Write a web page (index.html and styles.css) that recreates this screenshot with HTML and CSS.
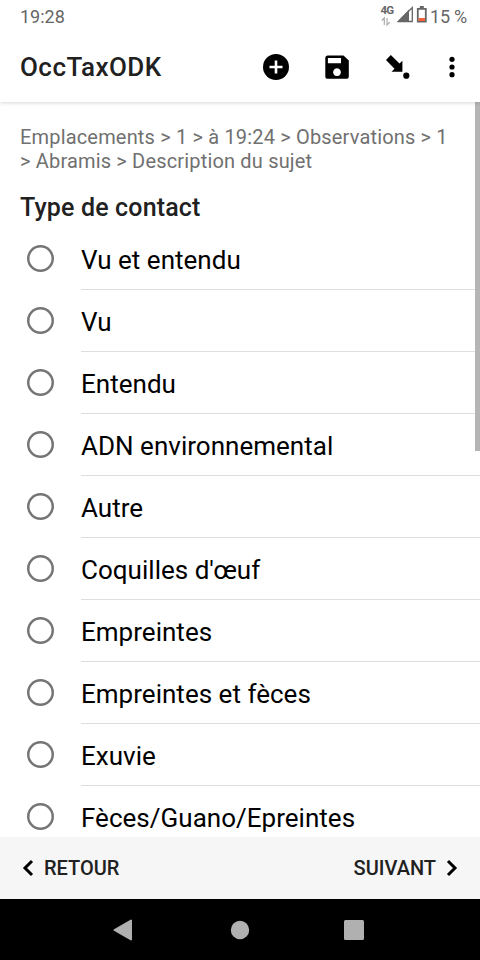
FILE: index.html
```html
<!DOCTYPE html>
<html lang="fr">
<head>
<meta charset="utf-8">
<title>OccTaxODK</title>
<link rel="stylesheet" href="styles.css">
</head>
<body>
<div class="status">
  <span class="clock">19:28</span>
  <svg class="signals" width="50" height="32" viewBox="0 0 50 32">
    <text class="network" x="0.500" y="14" textLength="13.500">4G</text>
    <path d="M1.800 20.500L4.300 18V25M7 18V25L9.800 22.200" fill="none" stroke="#aaa" stroke-width="1.200"/>
    <path d="M18.500 21.500L32.300 7.500V21.500Z" fill="none" stroke="#666" stroke-width="1.300"/>
    <path d="M17 22L29 9.500V22Z" fill="#666"/>
    <path d="M37.800 8.800H45.800V21.700H37.800Z" fill="none" stroke="#666" stroke-width="1.800"/>
    <path d="M39.800 6H43.800V8.500H39.800Z" fill="#666"/>
    <path d="M38.600 18H45V21H38.600Z" fill="#f4623a"/>
  </svg>
  <span class="charge">15 %</span>
</div>
<header class="appbar">
  <h1 class="title">OccTaxODK</h1>
  <div class="actions">
    <svg width="32" height="32" viewBox="0 0 32 32"><circle cx="16" cy="16" r="13"/><path d="M16 9.500V22.500M9.500 16H22.500" stroke="#fff" stroke-width="2.600"/></svg>
    <svg width="32" height="32" viewBox="0 0 32 32"><path fill-rule="evenodd" d="M6.900 4.400H22.500L27.800 9.600V25.200Q27.800 27.800 25.200 27.800H6.900Q4.300 27.800 4.300 25.200V7Q4.300 4.400 6.900 4.400ZM6.900 7H20V12.300H6.900ZM16 17.300a3.900 3.900 0 1 0 .01 0Z"/></svg>
    <svg width="32" height="32" viewBox="0 0 32 32"><path d="M8.800 4L17.500 12.500L20.400 9.800V20.700H9.500L12.500 17.700L4 9Z"/><circle cx="24.300" cy="24.700" r="3.100"/></svg>
    <svg class="more" width="12" height="32" viewBox="0 0 12 32"><circle cx="6" cy="8.300" r="2.600"/><circle cx="6" cy="16" r="2.600"/><circle cx="6" cy="23.700" r="2.600"/></svg>
  </div>
</header>
<main class="form">
  <p class="path">Emplacements &gt; 1 &gt; à 19:24 &gt; Observations &gt; 1<br>&gt; Abramis &gt; Description du sujet</p>
  <h2 class="question">Type de contact</h2>
  <ul class="choices">
    <li class="choice"><span class="radio"></span><span class="label">Vu et entendu</span></li>
    <li class="choice"><span class="radio"></span><span class="label">Vu</span></li>
    <li class="choice"><span class="radio"></span><span class="label">Entendu</span></li>
    <li class="choice"><span class="radio"></span><span class="label">ADN environnemental</span></li>
    <li class="choice"><span class="radio"></span><span class="label">Autre</span></li>
    <li class="choice"><span class="radio"></span><span class="label">Coquilles d'œuf</span></li>
    <li class="choice"><span class="radio"></span><span class="label">Empreintes</span></li>
    <li class="choice"><span class="radio"></span><span class="label">Empreintes et fèces</span></li>
    <li class="choice"><span class="radio"></span><span class="label">Exuvie</span></li>
    <li class="choice"><span class="radio"></span><span class="label">Fèces/Guano/Epreintes</span></li>
  </ul>
  <div class="scrollbar"></div>
</main>
<footer class="pager">
  <div class="step"><svg width="12" height="18" viewBox="0 0 12 18"><path d="M10 2L3 9L10 16"/></svg><span class="back">RETOUR</span></div>
  <div class="step"><span class="next">SUIVANT</span><svg width="12" height="18" viewBox="0 0 12 18"><path d="M2 2L9 9L2 16"/></svg></div>
</footer>
<nav class="system">
  <svg width="480" height="61" viewBox="0 0 480 61"><path d="M131 21.500V40.500L114.500 31Z" stroke="#b0b0b0" stroke-width="2" stroke-linejoin="round"/><circle cx="240" cy="31" r="9.200"/><rect x="344" y="21" width="20" height="20" rx="1.500"/></svg>
</nav>
</body>
</html>
```

FILE: styles.css
```css
* { box-sizing: border-box; }
body {
  margin: 0;
  width: 480px;
  height: 960px;
  overflow: hidden;
  display: flex;
  flex-direction: column;
  background: #fff;
  color: #212121;
  font-family: Roboto, sans-serif;
}
h1, h2, p, ul { margin: 0; padding: 0; }
svg { display: block; flex: none; }
.status {
  height: 34px;
  display: flex;
  align-items: center;
  padding: 0 13px 2px 20px;
  color: #666;
  font-size: 18px;
  white-space: nowrap;
}
.clock { flex: 1; }
.network { font-size: 11.5px; font-weight: 700; fill: #666; }
.charge { width: 37px; letter-spacing: -.2px; }
.appbar {
  position: relative;
  z-index: 1;
  height: 68px;
  flex: none;
  display: flex;
  align-items: center;
  justify-content: space-between;
  padding: 0 22.5px 3px 20px;
  box-shadow: 0 1px 4px rgba(0, 0, 0, .16);
  clip-path: inset(0 0 -6px 0);
}
.title { font-size: 26px; font-weight: 500; letter-spacing: .45px; }
.actions { display: flex; gap: 29px; fill: #000; }
.more { margin-left: 3px; }
.form {
  position: relative;
  z-index: 0;
  height: 735px;
  overflow: hidden;
}
.path {
  padding: 23px 0 0 20px;
  color: #707070;
  font-size: 20px;
  line-height: 24px;
  letter-spacing: .17px;
  white-space: nowrap;
}
.question {
  height: 55px;
  padding: 20px 0 0 20px;
  font-size: 25px;
  font-weight: 500;
  line-height: 30px;
  letter-spacing: .15px;
}
.choices { list-style: none; }
.choice { height: 62px; display: flex; padding-left: 27px; }
.radio {
  width: 27px;
  height: 27px;
  margin: 17px 27px 0 0;
  border-radius: 50%;
  box-shadow: inset 0 0 0 2.5px #757575;
}
.label {
  flex: 1;
  border-bottom: 1px solid #dedede;
  color: #000;
  font-size: 26px;
  line-height: 64px;
  letter-spacing: .02px;
}
.scrollbar {
  position: absolute;
  top: 0;
  right: 0;
  width: 5px;
  height: 349px;
  background: #b5b5b5;
}
.pager {
  height: 62px;
  flex: none;
  display: flex;
  align-items: center;
  justify-content: space-between;
  padding: 0 22px 0 22px;
  background: #f6f6f6;
  font-size: 20px;
  font-weight: 500;
}
.step { display: flex; align-items: center; gap: 10px; }
.step path { fill: none; stroke: #000; stroke-width: 3; }
.system { height: 61px; background: #000; fill: #b0b0b0; }
```
